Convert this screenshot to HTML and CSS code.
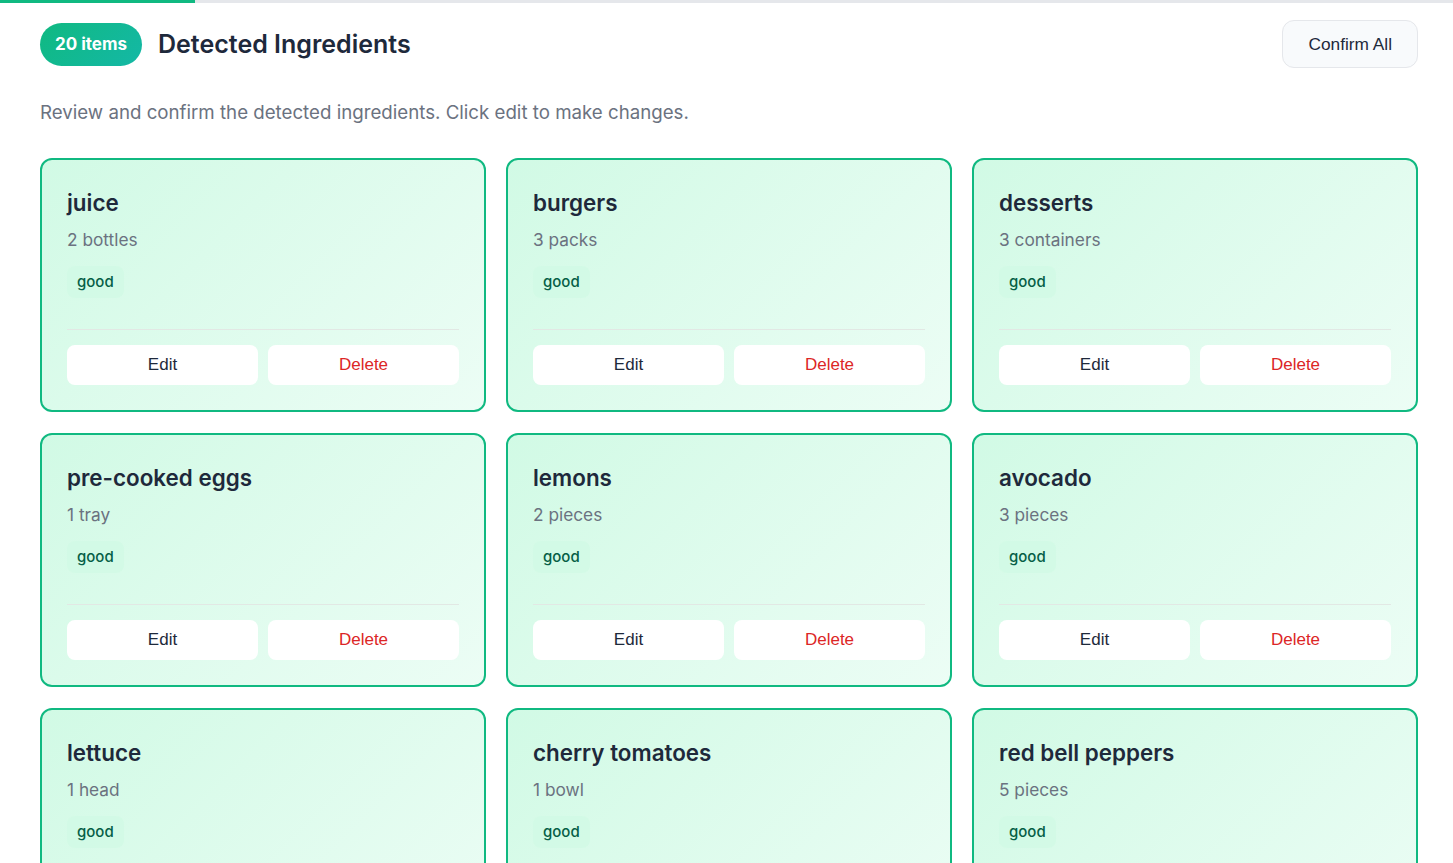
FILE: index.html
```html
<!DOCTYPE html>
<html lang="en">
<head>
    <meta charset="UTF-8">
    <meta name="viewport" content="width=device-width, initial-scale=1.0">
    <title>Detected Ingredients</title>
    <link rel="stylesheet" href="styles.css">
</head>
<body>
<div class="progress">
    <div class="progress-fill"></div>
</div>
<div class="page">
    <div class="header">
        <div class="header-left">
            <span class="count-badge">20 items</span>
            <h2>Detected Ingredients</h2>
        </div>
        <button class="confirm-btn">Confirm All</button>
    </div>
    <p class="intro">Review and confirm the detected ingredients. Click edit to make changes.</p>

    <div class="grid">
        <div class="card">
            <h3>juice</h3>
            <div class="qty">2 bottles</div>
            <span class="status">good</span>
            <div class="actions">
                <button class="btn">Edit</button>
                <button class="btn delete">Delete</button>
            </div>
        </div>
        <div class="card">
            <h3>burgers</h3>
            <div class="qty">3 packs</div>
            <span class="status">good</span>
            <div class="actions">
                <button class="btn">Edit</button>
                <button class="btn delete">Delete</button>
            </div>
        </div>
        <div class="card">
            <h3>desserts</h3>
            <div class="qty">3 containers</div>
            <span class="status">good</span>
            <div class="actions">
                <button class="btn">Edit</button>
                <button class="btn delete">Delete</button>
            </div>
        </div>
        <div class="card">
            <h3>pre-cooked eggs</h3>
            <div class="qty">1 tray</div>
            <span class="status">good</span>
            <div class="actions">
                <button class="btn">Edit</button>
                <button class="btn delete">Delete</button>
            </div>
        </div>
        <div class="card">
            <h3>lemons</h3>
            <div class="qty">2 pieces</div>
            <span class="status">good</span>
            <div class="actions">
                <button class="btn">Edit</button>
                <button class="btn delete">Delete</button>
            </div>
        </div>
        <div class="card">
            <h3>avocado</h3>
            <div class="qty">3 pieces</div>
            <span class="status">good</span>
            <div class="actions">
                <button class="btn">Edit</button>
                <button class="btn delete">Delete</button>
            </div>
        </div>
        <div class="card">
            <h3>lettuce</h3>
            <div class="qty">1 head</div>
            <span class="status">good</span>
            <div class="actions">
                <button class="btn">Edit</button>
                <button class="btn delete">Delete</button>
            </div>
        </div>
        <div class="card">
            <h3>cherry tomatoes</h3>
            <div class="qty">1 bowl</div>
            <span class="status">good</span>
            <div class="actions">
                <button class="btn">Edit</button>
                <button class="btn delete">Delete</button>
            </div>
        </div>
        <div class="card">
            <h3>red bell peppers</h3>
            <div class="qty">5 pieces</div>
            <span class="status">good</span>
            <div class="actions">
                <button class="btn">Edit</button>
                <button class="btn delete">Delete</button>
            </div>
        </div>
    </div>
</div>
</body>
</html>
```

FILE: styles.css
```css
body {
    margin: 0;
    font-family: Inter, "Noto Sans", sans-serif;
    background-color: #ffffff;
    color: #1f2937;
}

.progress {
    height: 3px;
    background-color: #e5e7eb;
}

.progress-fill {
    width: 195px;
    height: 3px;
    background-color: #10b981;
}

.page {
    padding: 17px 35px 40px 40px;
}

.header {
    display: flex;
    align-items: center;
    justify-content: space-between;
    height: 48px;
}

.header-left {
    display: flex;
    align-items: center;
    gap: 16px;
}

.count-badge {
    display: inline-flex;
    align-items: center;
    height: 43px;
    padding: 0 15px;
    border-radius: 22px;
    background: linear-gradient(135deg, #10b981, #14b8a6);
    color: #ffffff;
    font-size: 17px;
    font-weight: 700;
}

.header h2 {
    margin: 0;
    font-size: 25px;
    font-weight: 600;
    color: #1e293b;
}

.confirm-btn {
    height: 48px;
    padding: 0 25px;
    border: 1px solid #e5e7eb;
    border-radius: 12px;
    background-color: #f8fafc;
    color: #1e293b;
    font-family: "Liberation Sans", Arial, sans-serif;
    font-size: 17.3px;
    cursor: pointer;
}

.intro {
    margin: 31px 0 32px;
    font-size: 18.7px;
    line-height: 27px;
    color: #6b7280;
}

.grid {
    display: grid;
    grid-template-columns: repeat(3, 1fr);
    gap: 21px 20px;
}

.card {
    display: flex;
    flex-direction: column;
    align-items: flex-start;
    height: 254px;
    box-sizing: border-box;
    padding: 28px 25px 25px;
    border: 2px solid #10b981;
    border-radius: 12px;
    background: linear-gradient(135deg, #d1fae5, #ecfdf5);
}

.card h3 {
    margin: 0;
    font-size: 22.4px;
    line-height: 30px;
    font-weight: 600;
    color: #1e293b;
}

.qty {
    margin-top: 10px;
    font-size: 17.3px;
    line-height: 24px;
    color: #6b7280;
}

.status {
    margin-top: 14px;
    padding: 4px 10px;
    border-radius: 8px;
    background-color: rgba(209, 250, 229, 0.8);
    color: #065f46;
    font-size: 15px;
    line-height: 24px;
    font-weight: 500;
}

.actions {
    display: flex;
    gap: 10px;
    width: 100%;
    margin-top: auto;
    padding-top: 15px;
    border-top: 1px solid #e2e8e4;
}

.btn {
    flex: 1;
    height: 40px;
    border: none;
    border-radius: 8px;
    background-color: #ffffff;
    color: #1e293b;
    font-family: "Liberation Sans", Arial, sans-serif;
    font-size: 17px;
    cursor: pointer;
}

.btn.delete {
    color: #dc2626;
}
```
